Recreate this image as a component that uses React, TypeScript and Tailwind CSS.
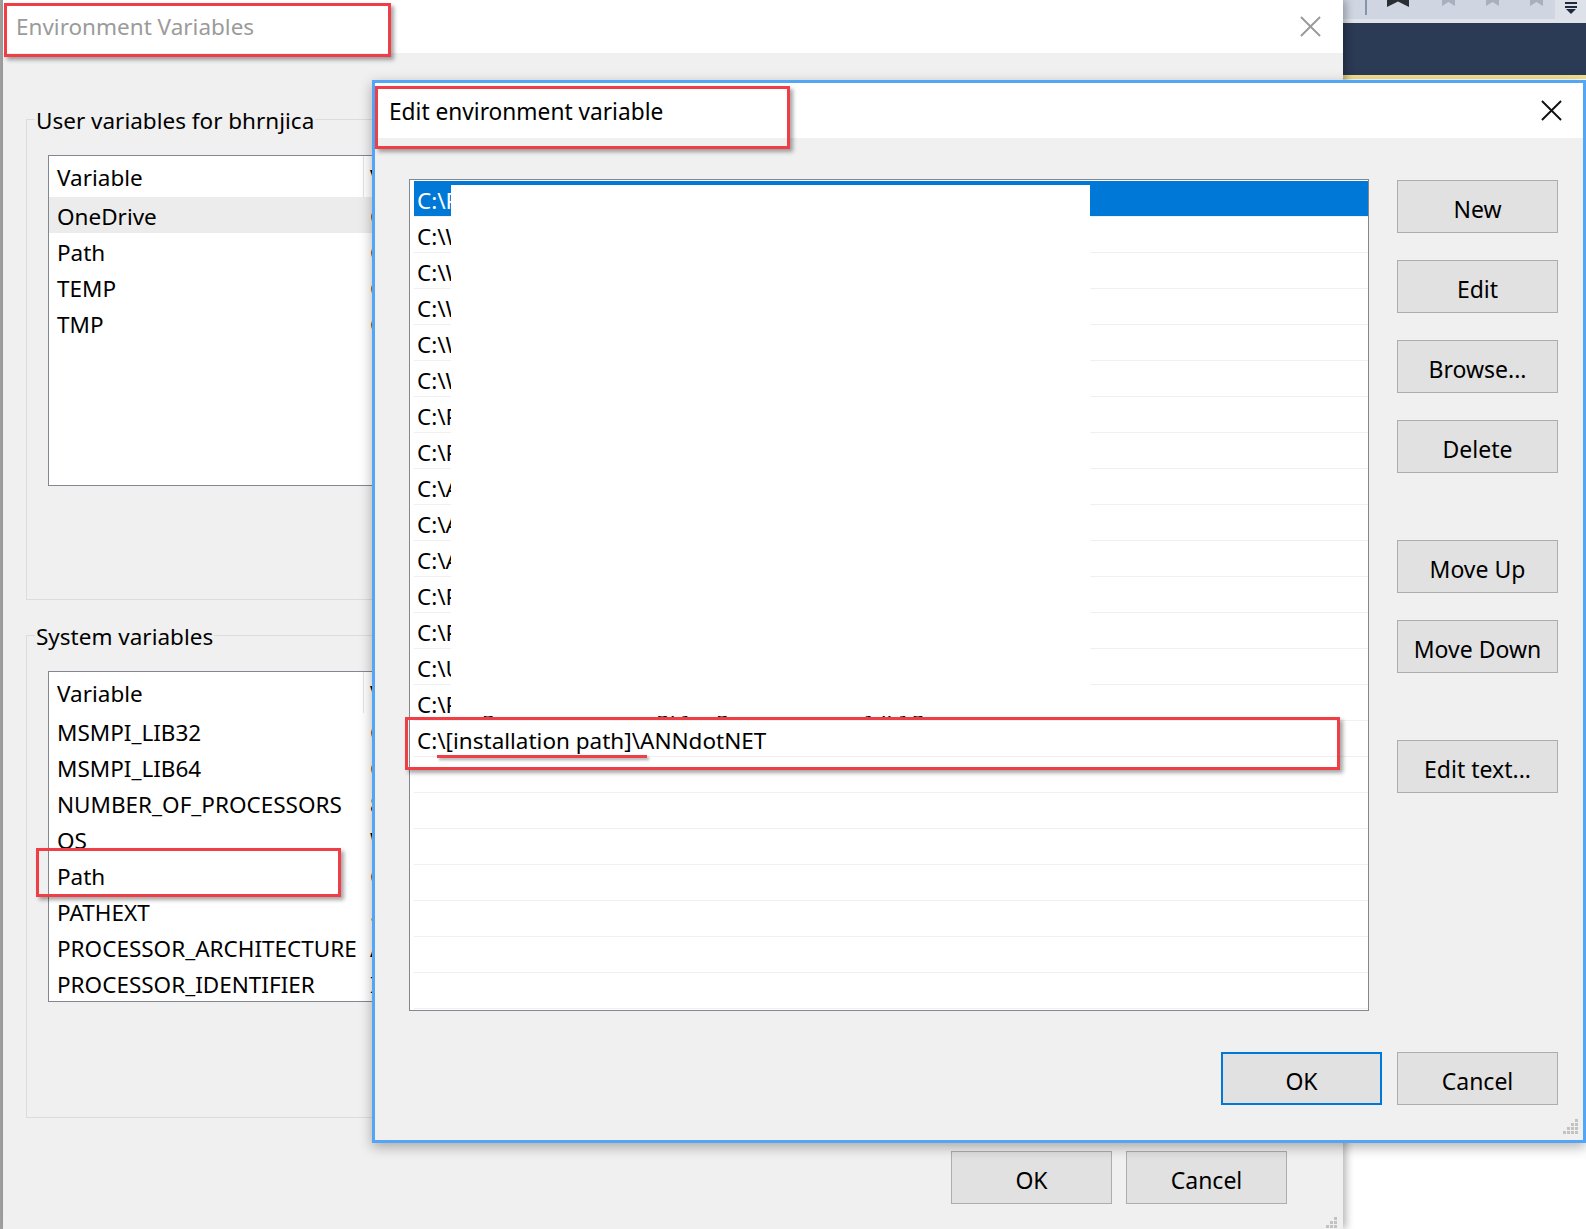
import React from "react";

function CloseX({ color, size = 22 }: { color: string; size?: number }) {
  return (
    <svg width={size} height={size} viewBox="0 0 22 22">
      <path d="M1 1 L21 21 M21 1 L1 21" stroke={color} strokeWidth="2" fill="none" />
    </svg>
  );
}

function Grip() {
  const dots = [
    [12, 0],
    [8, 4],
    [12, 4],
    [4, 8],
    [8, 8],
    [12, 8],
    [0, 12],
    [4, 12],
    [8, 12],
    [12, 12],
  ];
  return (
    <svg width="16" height="16" viewBox="0 0 16 16">
      {dots.map(([x, y], i) => (
        <rect key={i} x={x} y={y} width="3" height="3" fill="#c2c2c2" />
      ))}
    </svg>
  );
}

function Btn({ label, focused = false }: { label: string; focused?: boolean }) {
  return (
    <div
      className={
        focused
          ? "flex items-center justify-center pt-[5px] w-[161px] h-[53px] shrink-0 bg-[#e1e1e1] border-2 border-[#0078d7] text-[23px] text-black"
          : "flex items-center justify-center pt-[5px] w-[161px] h-[53px] shrink-0 bg-[#e1e1e1] border border-[#adadad] text-[23px] text-black"
      }
    >
      {label}
    </div>
  );
}

type Row = { name: string; value: string; sel?: boolean };

function VarList({ rows }: { rows: Row[] }) {
  return (
    <div className="ml-[21px] mt-[20px] w-[900px] h-[331px] border border-[#828790] bg-white flex flex-col">
      <div className="flex h-[41px] shrink-0">
        <div className="w-[315px] border-r border-[#e3e3e3] flex items-center pl-[8px] pt-[3px] text-[22.5px]">Variable</div>
        <div className="flex items-center pl-[6px] pt-[3px] text-[22.5px]">V</div>
      </div>
      {rows.map((r) => (
        <div
          key={r.name}
          className={
            r.sel
              ? "flex h-[36px] shrink-0 items-center pt-[3px] bg-[#ececec] text-[22.5px]"
              : "flex h-[36px] shrink-0 items-center pt-[3px] text-[22.5px]"
          }
        >
          <div className="w-[315px] pl-[8px] whitespace-nowrap">{r.name}</div>
          <div className="pl-[6px] whitespace-nowrap">{r.value}</div>
        </div>
      ))}
    </div>
  );
}

function Group({ title, rows, height }: { title: string; rows: Row[]; height: string }) {
  return (
    <div className={`w-[1290px] border border-[#dcdcdc] flex flex-col ${height}`}>
      <span className="-mt-[15px] ml-[8px] px-[1px] pt-[1px] w-fit bg-[#f0f0f0] leading-[29px] text-[22.5px] text-black">
        {title}
      </span>
      <VarList rows={rows} />
    </div>
  );
}

const pathRows = [
  "C:\\Pro",
  "C:\\WIN",
  "C:\\WIN",
  "C:\\WIN",
  "C:\\WIN",
  "C:\\WIN",
  "C:\\Pro",
  "C:\\Pro",
  "C:\\Ana",
  "C:\\Ana",
  "C:\\Ana",
  "C:\\Pro",
  "C:\\Pro",
  "C:\\Use",
  "C:\\Program Files (x86)\\gpj Mgr\\Tools\\Binn\\jqpyg",
  "C:\\[installation path]\\ANNdotNET",
];

export default function App() {
  const rows: string[] = [...pathRows];
  while (rows.length < 23) rows.push("");

  return (
    <div className="relative w-[1586px] h-[1229px] overflow-hidden bg-white text-black font-['Noto_Sans',sans-serif]">
      {/* Other application on the right */}
      <div className="absolute left-[1343px] top-0 w-[243px] h-[1229px] bg-white flex flex-col">
        <div className="h-[19px] flex bg-[#cfd6e2]">
          <div className="w-[24px] flex justify-end">
            <div className="w-[2px] h-[15px] bg-[#8594aa]" />
          </div>
          <div className="flex-1 flex items-start gap-[25px] pl-[20px]">
            <svg width="22" height="7" viewBox="0 0 22 7">
              <polygon points="0,0 22,0 22,7 11,1.5 0,7" fill="#2a2d33" />
            </svg>
            <svg width="13" height="6" viewBox="0 0 13 6" className="ml-[8px]">
              <polygon points="0,0 13,0 13,6 6.5,2 0,6" fill="#a9b0bd" />
            </svg>
            <svg width="13" height="6" viewBox="0 0 13 6" className="ml-[6px]">
              <polygon points="0,0 13,0 13,6 6.5,2 0,6" fill="#a9b0bd" />
            </svg>
            <svg width="13" height="6" viewBox="0 0 13 6" className="ml-[6px]">
              <polygon points="0,0 13,0 13,6 6.5,2 0,6" fill="#a9b0bd" />
            </svg>
          </div>
          <div className="w-[31px] bg-[#dde2ea] flex justify-center pt-[1px]">
            <svg width="14" height="14" viewBox="0 0 14 14">
              <rect x="1" y="1" width="12" height="2" fill="#1f2a3d" />
              <rect x="1" y="5" width="12" height="2" fill="#1f2a3d" />
              <polygon points="2,8 12,8 7,13" fill="#1f2a3d" />
            </svg>
          </div>
        </div>
        <div className="h-[4px] bg-[#dfe3ea]" />
        <div className="h-[52px] bg-[#2b3a55]" />
        <div className="h-[4px] bg-[#f2e08e]" />
        <div className="flex-1 bg-white" />
      </div>

      {/* Left edge strip */}
      <div className="absolute left-0 top-0 w-[3px] h-[1229px] bg-[#a3a3a3]" />

      {/* Back window: Environment Variables */}
      <div className="absolute left-[3px] top-0 w-[1340px] h-[1229px] bg-[#f0f0f0] flex flex-col shadow-[3px_0_8px_rgba(0,0,0,0.3)]">
        <div className="h-[53px] shrink-0 bg-white flex items-center justify-between pl-[13px] pr-[22px]">
          <span className="text-[22.5px] pt-[1px] text-[#9b9b9b]">Environment Variables</span>
          <CloseX color="#9a9a9a" size={21} />
        </div>
        <div className="flex flex-col pl-[23px] pt-[66px]">
          <Group
            title="User variables for bhrnjica"
            height="h-[481px]"
            rows={[
              { name: "OneDrive", value: "C", sel: true },
              { name: "Path", value: "C" },
              { name: "TEMP", value: "C" },
              { name: "TMP", value: "C" },
            ]}
          />
          <div className="mt-[35px]">
            <Group
              title="System variables"
              height="h-[483px]"
              rows={[
                { name: "MSMPI_LIB32", value: "C" },
                { name: "MSMPI_LIB64", value: "C" },
                { name: "NUMBER_OF_PROCESSORS", value: "8" },
                { name: "OS", value: "W" },
                { name: "Path", value: "C" },
                { name: "PATHEXT", value: "." },
                { name: "PROCESSOR_ARCHITECTURE", value: "A" },
                { name: "PROCESSOR_IDENTIFIER", value: "I" },
              ]}
            />
          </div>
        </div>
        <div className="flex justify-end gap-[14px] pr-[56px] mt-[33px]">
          <Btn label="OK" />
          <Btn label="Cancel" />
        </div>
        <div className="absolute right-[5px] bottom-[-4px]">
          <Grip />
        </div>
      </div>

      {/* Front dialog: Edit environment variable */}
      <div className="absolute left-[372px] top-[80px] w-[1214px] h-[1063px] border-[3px] border-[#52a6f5] bg-[#f0f0f0] flex flex-col shadow-[0_4px_12px_rgba(0,0,0,0.3)]">
        <div className="h-[55px] shrink-0 bg-white flex items-center justify-between pl-[14px] pr-[21px]">
          <span className="text-[22.7px] pt-[4px] text-black">Edit environment variable</span>
          <CloseX color="#111111" size={21} />
        </div>
        <div className="flex pl-[34px] pt-[41px]">
          <div className="w-[960px] h-[832px] shrink-0 border border-[#828790] bg-white pl-[4px] pt-[1px] flex flex-col overflow-hidden">
            {rows.map((t, i) => (
              <div
                key={i}
                className={
                  i === 0
                    ? "h-[36px] shrink-0 border-b border-[#f0f0f0] bg-[#0078d7] text-white flex items-center pl-[3px] pt-[5px] text-[22.5px] whitespace-nowrap"
                    : "h-[36px] shrink-0 border-b border-[#f0f0f0] flex items-center pl-[3px] pt-[5px] text-[22.5px] whitespace-nowrap"
                }
              >
                {t}
              </div>
            ))}
          </div>
          <div className="ml-[28px] pt-[1px] flex flex-col">
            <Btn label="New" />
            <div className="mt-[27px]">
              <Btn label="Edit" />
            </div>
            <div className="mt-[27px]">
              <Btn label="Browse..." />
            </div>
            <div className="mt-[27px]">
              <Btn label="Delete" />
            </div>
            <div className="mt-[67px]">
              <Btn label="Move Up" />
            </div>
            <div className="mt-[27px]">
              <Btn label="Move Down" />
            </div>
            <div className="mt-[67px]">
              <Btn label="Edit text..." />
            </div>
          </div>
        </div>
        <div className="flex justify-end gap-[15px] pr-[25px] mt-[41px]">
          <Btn label="OK" focused />
          <Btn label="Cancel" />
        </div>
        <div className="absolute right-[4px] bottom-[5px]">
          <Grip />
        </div>
      </div>

      {/* Redaction */}
      <div className="absolute left-[451px] top-[185px] w-[639px] h-[531px] bg-white" />

      {/* Annotations */}
      <div className="absolute left-[4px] top-[3px] w-[387px] h-[54px] border-[3px] border-[#ef3e45] shadow-[3px_3px_4px_rgba(0,0,0,0.35)]" />
      <div className="absolute left-[375px] top-[86px] w-[415px] h-[63px] border-[3px] border-[#ef3e45] shadow-[3px_3px_4px_rgba(0,0,0,0.35)]" />
      <div className="absolute left-[36px] top-[848px] w-[305px] h-[49px] border-[3px] border-[#ef3e45] shadow-[3px_3px_4px_rgba(0,0,0,0.35)]" />
      <div className="absolute left-[405px] top-[717px] w-[935px] h-[53px] border-[3px] border-[#ef3e45] shadow-[3px_3px_4px_rgba(0,0,0,0.35)]" />
      <div className="absolute left-[437px] top-[755px] w-[210px] h-[3px] bg-[#ef3e45] shadow-[2px_2px_3px_rgba(0,0,0,0.35)]" />
    </div>
  );
}
